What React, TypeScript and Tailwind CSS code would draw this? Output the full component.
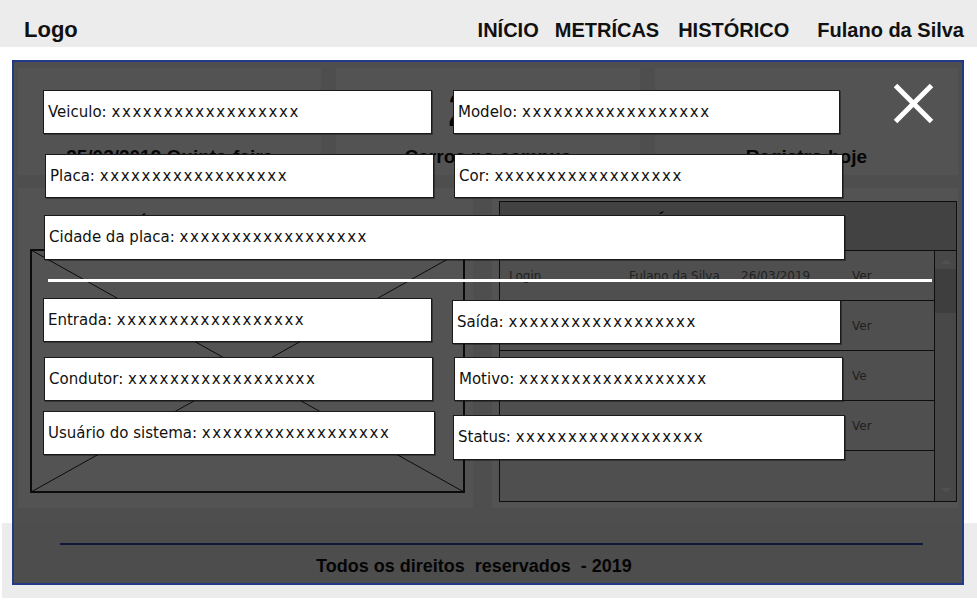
// ── Data
const stats = [
  { value: "14:32", label: "25/03/2019 Quinta-feira" },
  { value: "215", label: "Carros no campus" },
  { value: "48", label: "Registro hoje" },
];

const registros = [
  { tipo: "Login", nome: "Fulano da Silva", data: "26/03/2019", acao: "Ver" },
  { tipo: "Login", nome: "Fulano da Silva", data: "26/03/2019", acao: "Ver" },
  { tipo: "Login", nome: "Fulano da Silva", data: "26/03/2019", acao: "Ve" },
  { tipo: "Login", nome: "Fulano da Silva", data: "26/03/2019", acao: "Ver" },
  { tipo: "", nome: "", data: "", acao: "" },
];

function Field({ label, className = "" }: { label: string; className?: string }) {
  return (
    <div
      className={`flex items-center shrink-0 bg-white border border-[#1a1a1a] shadow-[1px_1px_0_rgba(0,0,0,0.35)] pl-[4px] text-[15px] text-[#111] font-['DejaVu_Sans',sans-serif] whitespace-pre ${className}`}
    >
      <span>{`${label}: `}</span>
      <span className="tracking-[1.6px]">xxxxxxxxxxxxxxxxxx</span>
    </div>
  );
}

function StatCard({ value, label }: { value: string; label: string }) {
  return (
    <div className="bg-white flex flex-col items-center pt-[18px]">
      <span className="text-[48px] font-bold leading-none text-[#111]">{value}</span>
      <span className="mt-[13px] text-[19px] font-bold leading-none text-[#111]">{label}</span>
    </div>
  );
}

function DetailsModal() {
  return (
    <div className="absolute left-[12px] top-[60px] w-[952px] h-[525px] border-2 border-[#22398a] bg-[rgba(0,0,0,0.675)]">
      {/* Close */}
      <button className="absolute right-[28px] top-[21px]">
        <svg width="41" height="41" viewBox="0 0 41 41">
          <line x1="2.5" y1="2.5" x2="38.5" y2="38.5" stroke="#ffffff" strokeWidth="5" />
          <line x1="38.5" y1="2.5" x2="2.5" y2="38.5" stroke="#ffffff" strokeWidth="5" />
        </svg>
      </button>

      <div className="flex flex-col pl-[29px] pt-[28px]">
        <div className="flex gap-[21px]">
          <Field label="Veiculo" className="w-[389px] h-[44px]" />
          <Field label="Modelo" className="w-[387px] h-[44px]" />
        </div>
        <div className="flex gap-[20px] mt-[20px] ml-[2px]">
          <Field label="Placa" className="w-[389px] h-[44px]" />
          <Field label="Cor" className="w-[389px] h-[44px]" />
        </div>
        <Field label="Cidade da placa" className="mt-[17px] ml-[1px] w-[801px] h-[45px]" />

        <div className="mt-[19px] ml-[5px] w-[884px] h-[3px] bg-white" />

        <div className="flex items-start gap-[20px] mt-[16px]">
          <Field label="Entrada" className="w-[389px] h-[44px]" />
          <Field label="Saída" className="mt-[2px] w-[389px] h-[44px]" />
        </div>
        <div className="flex gap-[21px] mt-[13px] ml-[1px]">
          <Field label="Condutor" className="w-[389px] h-[44px]" />
          <Field label="Motivo" className="w-[389px] h-[44px]" />
        </div>
        <div className="flex items-start gap-[18px] mt-[10px]">
          <Field label="Usuário do sistema" className="w-[392px] h-[44px]" />
          <Field label="Status" className="mt-[4px] w-[392px] h-[45px]" />
        </div>
      </div>
    </div>
  );
}

export default function App() {
  return (
    <div className="relative w-[977px] h-[600px] overflow-hidden bg-white font-['Liberation_Sans',Arial,sans-serif] text-[#111]">
      {/* Header */}
      <header className="h-[47px] bg-[#ececec] flex items-center pt-[12px] pl-[24px] pr-[13px]">
        <span className="text-[22px] font-bold leading-none">Logo</span>
        <nav className="ml-auto flex items-center text-[20px] font-bold leading-none">
          <span>INÍCIO</span>
          <span className="ml-[16px]">METRÍCAS</span>
          <span className="ml-[19px]">HISTÓRICO</span>
          <span className="ml-[28px]">Fulano da Silva</span>
        </nav>
      </header>

      {/* Dashboard */}
      <main className="ml-[12px] mt-[13px] w-[952px] h-[463px] bg-[#efefef] px-[6px] pt-[8px]">
        <div className="grid grid-cols-3 gap-[15px] h-[107px]">
          {stats.map((s) => (
            <StatCard key={s.label} value={s.value} label={s.label} />
          ))}
        </div>

        <div className="flex gap-[19px] mt-[13px] h-[320px]">
          {/* Image panel */}
          <section className="w-[455px] bg-white flex flex-col">
            <h2 className="mt-[27px] text-center text-[18px] font-bold leading-none">
              Última imagem capturada
            </h2>
            <div className="mt-auto mb-[15px] ml-[12px] w-[435px] h-[244px]">
              <svg width="435" height="244" viewBox="0 0 435 244">
                <rect x="1" y="1" width="433" height="242" fill="none" stroke="#222222" strokeWidth="2" />
                <line x1="1" y1="1" x2="434" y2="243" stroke="#222222" strokeWidth="1" />
                <line x1="434" y1="1" x2="1" y2="243" stroke="#222222" strokeWidth="1" />
              </svg>
            </div>
          </section>

          {/* History table */}
          <section className="flex-1 bg-white pt-[13px] pl-[7px] pr-[1px]">
            <div className="h-[301px] border border-[#2b2b2b] flex flex-col">
              <div className="h-[49px] shrink-0 bg-[#cccccc] border-b border-[#2b2b2b] pt-[11px] text-center text-[18px] font-bold leading-none">
                Últimos registros
              </div>
              <div className="flex flex-1 min-h-0">
                <div className="flex-1 bg-[#f2f2f2] font-['DejaVu_Sans',sans-serif] text-[12px] text-[#666]">
                  {registros.map((r, i) => (
                    <div
                      key={i}
                      className="h-[50px] grid grid-cols-[120px_112px_111px_1fr] items-center pl-[9px] border-b border-[#2b2b2b] last:border-b-0"
                    >
                      <span>{r.tipo}</span>
                      <span>{r.nome}</span>
                      <span>{r.data}</span>
                      <span>{r.acao}</span>
                    </div>
                  ))}
                </div>
                {/* Scrollbar */}
                <div className="w-[22px] bg-[#dcdcdc] border-l border-[#2b2b2b] flex flex-col items-center">
                  <svg width="12" height="16" viewBox="0 0 12 16" className="mt-[2px]">
                    <path d="M1 11 L6 6 L11 11 Z" fill="#f4f4f4" />
                  </svg>
                  <div className="w-full h-[44px] bg-[#bdbdbd]" />
                  <svg width="12" height="16" viewBox="0 0 12 16" className="mt-auto mb-[2px]">
                    <path d="M1 5 L6 10 L11 5 Z" fill="#f4f4f4" />
                  </svg>
                </div>
              </div>
            </div>
          </section>
        </div>
      </main>

      {/* Footer */}
      <footer className="ml-[2px] h-[75px] bg-[#ececec] flex flex-col">
        <div className="mt-[20px] ml-[58px] w-[863px] h-[2px] bg-[#2a4ea8]" />
        <p className="mt-[12px] ml-[314px] text-[18px] font-bold leading-none whitespace-pre">
          Todos os direitos  reservados  - 2019
        </p>
      </footer>

      <DetailsModal />
    </div>
  );
}
